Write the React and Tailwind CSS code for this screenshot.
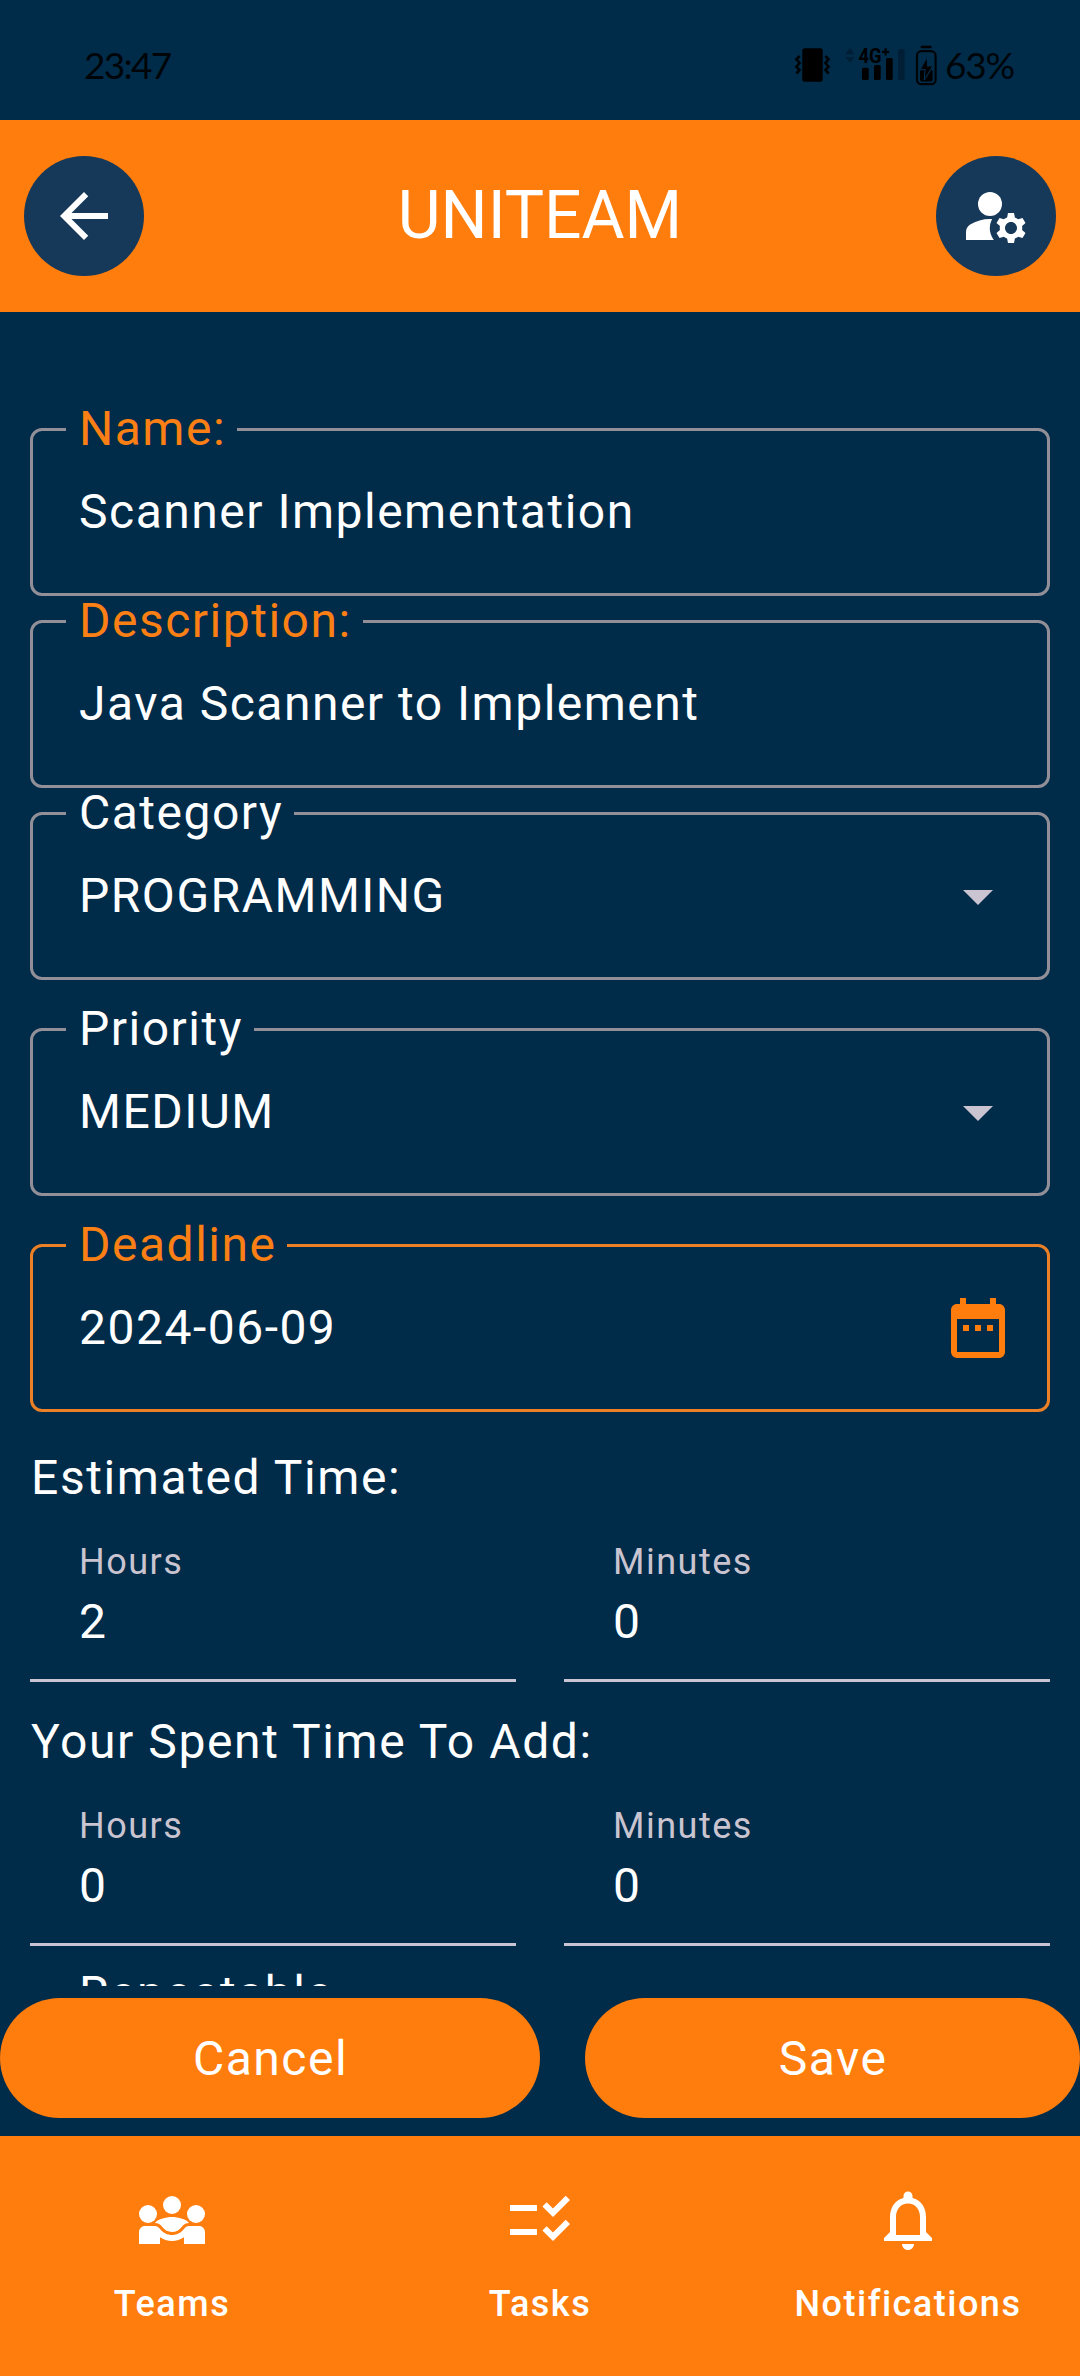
import React from "react";
import {
  MdArrowBack,
  MdArrowDropDown,
  MdChecklistRtl,
  MdDateRange,
  MdManageAccounts,
  MdNotificationsNone,
} from "react-icons/md";

function StatusBar() {
  return (
    <div className="flex h-[120px] shrink-0 items-center justify-between pt-[9px] pr-[66px] pl-[84px] font-['Lato',sans-serif] text-[37px] leading-[48px] text-black/90">
      <span className="tracking-[-1.7px]">23:47</span>
      <div className="flex items-center">
        <svg className="h-[42px] w-[144px]" viewBox="0 0 144 42">
          <rect x="8.3" y="4.3" width="20.4" height="33.4" rx="2.5" />
          <g fill="none" stroke="currentColor" strokeWidth="2.6">
            <path d="M5.6 12 L2.4 15.4 L5.6 19 L2.4 22.6 L5.6 26 L2.4 29.5" />
            <path d="M31.4 12 L34.6 15.4 L31.4 19 L34.6 22.6 L31.4 26 L34.6 29.5" />
          </g>
          <g fill="#001f36">
            <path d="M51.3 10.3 L56 4 L60.7 10.3 Z M51.3 13 L56 18.6 L60.7 13 Z" />
            <rect x="104" y="5" width="6.6" height="31" rx="1.5" />
          </g>
          <text x="64.6" y="19.4" fontSize="20.5" fontWeight="700" fontFamily="Roboto, sans-serif" letterSpacing="0" textLength="23" lengthAdjust="spacingAndGlyphs">4G</text>
          <path d="M91.6 4.2 V11.4 M88 7.8 H95.2" stroke="currentColor" strokeWidth="2.3" />
          <rect x="68" y="23.7" width="6.7" height="12.3" rx="1.5" />
          <rect x="80" y="21" width="6.7" height="15" rx="1.5" />
          <rect x="92" y="14" width="6.7" height="22" rx="1.5" />
          <rect x="126.7" y="1.8" width="11" height="2.5" rx="1" />
          <rect x="123" y="7.2" width="18.6" height="33" rx="4.5" fill="none" stroke="currentColor" strokeWidth="2.2" />
          <rect x="126" y="25.4" width="12.6" height="12" rx="2" />
          <path
            d="M133.4 12.5 L126 25.6 H131 L130.2 36 L139 22 H133.6 Z"
            stroke="#002b49"
            strokeWidth="1.2"
          />
        </svg>
        <span className="ml-[7px] tracking-[-1.2px]">63%</span>
      </div>
    </div>
  );
}

function RoundButton({ children }) {
  return (
    <button className="flex size-[120px] items-center justify-center rounded-full bg-[#16395a] text-white">
      {children}
    </button>
  );
}

function OutlinedField({ label, value, icon, frame, labelColor }) {
  return (
    <fieldset className={`h-[168px] rounded-[12px] border-[3px] ${frame}`}>
      <legend className={`ml-[33px] h-[3px] pr-[11px] pl-[13px] leading-[2px] whitespace-nowrap ${labelColor}`}>
        {label}
      </legend>
      <div className="flex h-[162px] items-center justify-between pr-[33px] pl-[46px]">
        <span className="leading-[72px]">{value}</span>
        {icon}
      </div>
    </fieldset>
  );
}

function FilledField({ label, value }) {
  return (
    <div className="h-[168px] flex-1 border-b-[3px] border-[#c9c4d3] pt-[24px] pl-[49px]">
      <div className="text-[36px] leading-[48px] text-[#cac4d0]">{label}</div>
      <div className="leading-[72px]">{value}</div>
    </div>
  );
}

function TimeRow({ hours, minutes }) {
  return (
    <div className="flex gap-[48px]">
      <FilledField label="Hours" value={hours} />
      <FilledField label="Minutes" value={minutes} />
    </div>
  );
}

function TeamsIcon() {
  return (
    <svg className="size-[72px]" viewBox="0 0 24 24" fill="currentColor">
      <circle cx="4" cy="10" r="3" />
      <circle cx="20" cy="10" r="3" />
      <circle cx="12" cy="7" r="3" />
      <path d="M6.32 13.01c.96.02 1.85.5 2.45 1.34C9.5 15.38 10.71 16 12 16c1.29 0 2.5-.62 3.23-1.66.6-.84 1.49-1.32 2.45-1.34C16.96 11.78 14.08 11 12 11c-2.07 0-4.96.78-5.68 2.01z" />
      <path d="M21 14h-3.27c-.77 0-1.35.45-1.68.92C16.01 14.98 14.69 17 12 17c-1.43 0-3.03-.64-4.05-2.08C7.56 14.37 6.95 14 6.27 14H3c-1.1 0-2 .9-2 2v4h7v-2.26c1.15.8 2.54 1.26 4 1.26s2.85-.46 4-1.26V20h7v-4c0-1.1-.9-2-2-2z" />
    </svg>
  );
}

function NavItem({ label, children }) {
  return (
    <div className="flex flex-1 flex-col items-center pt-[48px]">
      {children}
      <span className="mt-[24px] text-[36px] leading-[48px] font-medium">{label}</span>
    </div>
  );
}

export default function App() {
  const gray = "border-[#938f99]";
  const arrow = <MdArrowDropDown className="size-[72px] text-[#cac4d0]" />;
  return (
    <div className="flex h-[2376px] w-[1080px] flex-col overflow-hidden bg-[#002b49] font-['Roboto',sans-serif] text-[48px] tracking-[1.5px] text-white">
      <StatusBar />

      <header className="flex h-[192px] shrink-0 items-center justify-between bg-[#ff7d0d] px-[24px]">
        <RoundButton>
          <MdArrowBack className="size-[72px]" />
        </RoundButton>
        <h1 className="text-[66px] leading-[84px] tracking-normal">UNITEAM</h1>
        <RoundButton>
          <MdManageAccounts className="size-[72px]" />
        </RoundButton>
      </header>

      <main className="h-[1674px] shrink-0 overflow-hidden px-[30px] pt-[116px]">
        <div className="flex flex-col gap-[24px]">
          <OutlinedField label="Name:" value="Scanner Implementation" frame={gray} labelColor="text-[#fa7f14]" />
          <OutlinedField label="Description:" value="Java Scanner to Implement" frame={gray} labelColor="text-[#fa7f14]" />
          <OutlinedField label="Category" value="PROGRAMMING" frame={gray} icon={arrow} />
        </div>
        <div className="mt-[48px] flex flex-col gap-[48px]">
          <OutlinedField label="Priority" value="MEDIUM" frame={gray} icon={arrow} />
          <OutlinedField
            label="Deadline"
            value="2024-06-09"
            frame="border-[#ec8026]"
            labelColor="text-[#fa7f14]"
            icon={<MdDateRange className="size-[72px] text-[#ff7d0d]" />}
          />
        </div>

        <h2 className="mt-[30px] pl-[1px] leading-[72px] tracking-[1.6px]">Estimated Time:</h2>
        <TimeRow hours="2" minutes="0" />

        <h2 className="mt-[24px] pl-[1px] leading-[72px] tracking-[1.6px]">Your Spent Time To Add:</h2>
        <TimeRow hours="0" minutes="0" />

        <div className="mt-[12px] pl-[49px] leading-[72px]">Repeatable</div>
      </main>

      <div className="mt-[12px] flex h-[120px] shrink-0 gap-[45px] leading-[72px]">
        <button className="w-[540px] rounded-full bg-[#ff7d0d] pt-[2px] pl-[1px]">Cancel</button>
        <button className="flex-1 rounded-full bg-[#ff7d0d] pt-[2px] pl-[1px]">Save</button>
      </div>

      <nav className="mt-[18px] flex h-[240px] shrink-0 gap-[24px] bg-[#ff7d0d]">
        <NavItem label="Teams">
          <TeamsIcon />
        </NavItem>
        <NavItem label="Tasks">
          <MdChecklistRtl className="size-[72px]" />
        </NavItem>
        <NavItem label="Notifications">
          <MdNotificationsNone className="size-[72px]" />
        </NavItem>
      </nav>
    </div>
  );
}
